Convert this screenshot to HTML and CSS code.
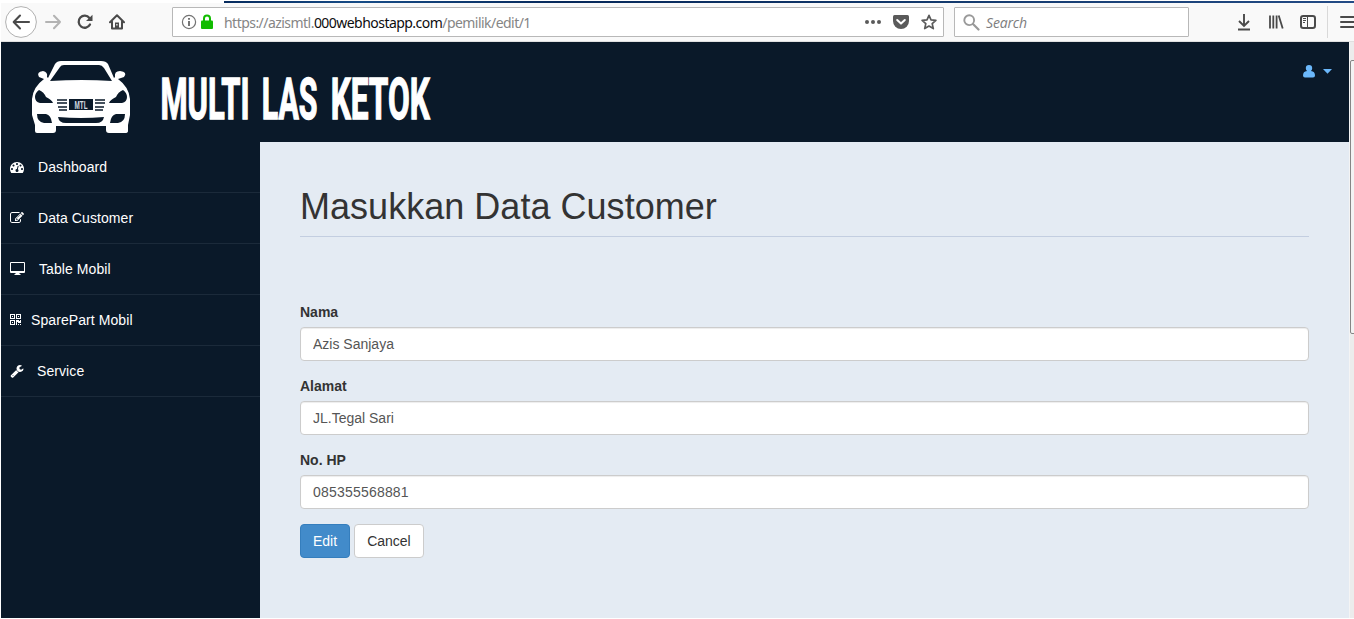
FILE: index.html
```html
<!DOCTYPE html>
<html lang="id">
<head>
<meta charset="utf-8">
<title>Multi Las Ketok</title>
<link rel="stylesheet" href="styles.css">
</head>
<body>
<div class="window">
  <div class="titlebar"></div>
  <div class="toolbar">
    <div class="nav">
      <span class="back"><svg width="32" height="32" viewBox="0 0 32 32"><circle cx="16" cy="16" r="15.4" fill="#fff" stroke="#b1b1b1"/><path d="M24 16H9M15 9.5L8.7 16l6.300 6.500" fill="none" stroke="#4a4a4a" stroke-width="2.100" stroke-linecap="round" stroke-linejoin="round"/></svg></span>
      <svg class="forward" width="16" height="16" viewBox="0 0 16 16"><path d="M1 8h14M9 1.800L15 8l-6 6.200" fill="none" stroke="#b3b3b3" stroke-width="2" stroke-linecap="round" stroke-linejoin="round"/></svg>
      <svg class="reload" width="16" height="16" viewBox="0 0 16 16"><path d="M13 10.500A6 6 0 1 1 12.400 4" fill="none" stroke="#4a4a4a" stroke-width="2.300" stroke-linecap="round"/><path d="M15.500.8v6.300H9z" fill="#4a4a4a"/></svg>
      <svg class="home" width="16" height="16" viewBox="0 0 16 16"><path d="M1 8.200L8 1.300l7 6.900M3 7.500v7h10v-7" fill="none" stroke="#4a4a4a" stroke-width="2" stroke-linecap="round" stroke-linejoin="round"/><path d="M6 14V8.500h4V14z" fill="#4a4a4a"/><path d="M7.300 10h1.200v1.500H7.300z" fill="#fff"/></svg>
    </div>
    <div class="urlbar">
      <svg class="info" width="16" height="16" viewBox="0 0 16 16"><circle cx="8" cy="8" r="6.600" fill="none" stroke="#737373" stroke-width="1.200"/><path d="M7.100 7h1.800v5H7.100zM7.100 4h1.800v1.800H7.100z" fill="#666"/></svg>
      <svg class="lock" width="12" height="16" viewBox="0 0 12 16"><path d="M3 7V4.600a3 3 0 0 1 6 0V7" fill="none" stroke="#12bc00" stroke-width="2"/><rect y="6.500" width="12" height="8.500" rx="1" fill="#12bc00"/></svg>
      <div class="address">https://azismtl.<b class="domain">000webhostapp.com</b>/pemilik/edit/1</div>
      <svg class="dots" width="18" height="6" viewBox="0 0 18 6"><g fill="#5a5a5a"><circle cx="3" cy="3" r="2"/><circle cx="9" cy="3" r="2"/><circle cx="15" cy="3" r="2"/></g></svg>
      <svg class="pocket" width="16" height="14" viewBox="0 0 16 14"><path d="M1.500 0h13Q16 0 16 1.500V6A8 8 0 0 1 0 6V1.500Q0 0 1.500 0z" fill="#5a5a5a"/><path d="M4.200 5L8 8.600 11.800 5" fill="none" stroke="#fff" stroke-width="2" stroke-linecap="round" stroke-linejoin="round"/></svg>
      <svg class="star" width="16" height="16" viewBox="0 0 16 16"><path d="M8 1.300l2 4.500 4.900.5-3.700 3.300 1.100 5L8 12.100l-4.300 2.500 1.100-5L1.100 6.300l4.900-.5z" fill="none" stroke="#5a5a5a" stroke-width="1.700" stroke-linejoin="round"/></svg>
    </div>
    <div class="searchbar">
      <svg width="17" height="17" viewBox="0 0 17 17"><circle cx="6.200" cy="6.200" r="4.900" fill="none" stroke="#999" stroke-width="1.900"/><path d="M10 10l5.500 5.500" stroke="#999" stroke-width="2.200" stroke-linecap="round"/></svg>
      <span class="hint">Search</span>
    </div>
    <div class="tools">
      <svg width="16" height="18" viewBox="0 0 16 18"><path d="M8 1v11M3 8l5 5 5-5M2 16.500h12" fill="none" stroke="#4a4a4a" stroke-width="1.900"/></svg>
      <svg width="16" height="16" viewBox="0 0 16 16"><path d="M2 1.500v13M5.300 1.500v13M8.600 1.500v13M10.700 1.500l4 13" fill="none" stroke="#4a4a4a" stroke-width="1.800"/></svg>
      <svg width="16" height="14" viewBox="0 0 16 14"><rect x="1" y="1" width="14" height="12" rx="2.200" fill="none" stroke="#4a4a4a" stroke-width="2"/><path d="M7.500 1v12M3 3.500h3M3 5.500h3M3 7.500h2" fill="none" stroke="#4a4a4a"/></svg>
      <span class="separator"></span>
      <svg class="menu" width="16" height="14" viewBox="0 0 16 14"><path d="M1 2h14M1 7h14M1 12h14" stroke="#4a4a4a" stroke-width="2" stroke-linecap="round"/></svg>
    </div>
  </div>
  <div class="viewport">
    <div class="page">
      <header class="header">
        <svg class="car" width="100" height="74" viewBox="0 0 100 74">
          <path fill="#fff" d="M17 17L24 3Q26 0 30 0H70Q75 0 77 3L83 17 84 16Q83 10 89 10 97 11 93 16L87 18Q98 26 99 38V54L97 64V70Q97 72 94 72H78Q75 72 75 69V65H25V69Q25 72 22 72H6Q4 72 4 70V64L1 54V38Q2 26 13 18L8 16Q5 11 12 10 17 11 16 16z"/>
          <g fill="#0a1929"><path d="M29 6Q30 4 33 4H68Q71 4 73 7L81 20Q51 18 19 20z"/><path d="M8 29Q13 31 15 36 21 39 22 42H9Q4 41 4 36 4 32 8 29zM92 29Q87 31 85 36 79 39 78 42H91Q96 41 96 36 96 32 92 29zM6 53H15Q20 54 21 62H13Q6 61 6 53zM94 53H85Q80 54 79 62H87Q94 61 94 53zM27 56Q50 58 73 56 72 62 65 62H35Q28 62 27 56z"/><rect x="38" y="38" width="24" height="11"/></g>
          <path d="M26 39H36M26 42H36M27 46H36M28 49H36M64 39H74M64 42H74M64 46H73M64 49H72" stroke="#0a1929" stroke-width="1.600"/>
          <text class="plate" x="43.500" y="47.500" textLength="13" lengthAdjust="spacingAndGlyphs">MTL</text>
        </svg>
        <svg class="wordmark" width="280" height="60" viewBox="0 0 280 60">
          <g transform="scale(.53 1)">
            <text x="1" y="50" textLength="168" lengthAdjust="spacingAndGlyphs">MULTI</text>
            <text x="192" y="50" textLength="105" lengthAdjust="spacingAndGlyphs">LAS</text>
            <text x="322" y="50" textLength="187" lengthAdjust="spacingAndGlyphs">KETOK</text>
          </g>
        </svg>
        <div class="user">
          <svg width="12" height="13" viewBox="0 0 12 13"><path d="M6 0a3.200 3.200 0 0 1 3.200 3.200Q9.200 5 8 6 12 6.300 12 10.500 12 12.500 10 12.500H2Q0 12.500 0 10.500 0 6.300 4 6 2.800 5 2.800 3.200A3.200 3.200 0 0 1 6 0z" fill="#6bb8fb"/></svg>
          <svg width="9" height="5" viewBox="0 0 9 5"><path d="M0 0h9L4.500 4.800z" fill="#6bb8fb"/></svg>
        </div>
      </header>
      <div class="body">
        <nav class="sidebar">
          <a class="item"><svg width="14" height="14" viewBox="0 0 1792 1792"><path d="M384 1152q0-53-37.500-90.500t-90.500-37.500-90.500 37.500-37.500 90.500 37.500 90.500 90.500 37.500 90.500-37.500 37.500-90.500zm192-448q0-53-37.500-90.500t-90.500-37.500-90.500 37.500-37.500 90.500 37.500 90.500 90.500 37.500 90.500-37.500 37.500-90.500zm428 481l101-382q6-26-7.500-48.500t-38.500-29.500-48 6.500-30 39.500l-101 382q-60 5-107 43.500t-63 98.500q-20 77 20 146t117 89 146-20 89-117q16-60-6-117t-72-91zm660-33q0-53-37.500-90.500t-90.500-37.500-90.500 37.500-37.500 90.500 37.500 90.500 90.500 37.500 90.500-37.500 37.500-90.500zm-640-640q0-53-37.500-90.500t-90.500-37.500-90.500 37.500-37.500 90.500 37.500 90.500 90.500 37.500 90.500-37.500 37.500-90.500zm448 192q0-53-37.500-90.500t-90.500-37.500-90.500 37.500-37.500 90.500 37.500 90.500 90.500 37.500 90.500-37.500 37.500-90.500zm320 448q0 261-141 483-19 29-54 29h-1402q-35 0-54-29-141-221-141-483 0-182 71-348t191-286 286-191 348-71 348 71 286 191 191 286 71 348z"/></svg><span>Dashboard</span></a>
          <a class="item"><svg width="14" height="14" viewBox="0 0 1792 1792"><path d="M888 1184l116-116-152-152-116 116v56h96v96h56zm440-720q-16-16-33 1l-350 350q-17 17-1 33t33-1l350-350q17-17 1-33zm80 594v190q0 119-84.500 203.500t-203.500 84.500h-832q-119 0-203.500-84.500t-84.500-203.500v-832q0-119 84.500-203.500t203.500-84.500h832q63 0 117 25 15 7 18 23 3 17-9 29l-49 49q-14 14-32 8-23-6-45-6h-832q-66 0-113 47t-47 113v832q0 66 47 113t113 47h832q66 0 113-47t47-113v-126q0-13 9-22l64-64q15-15 35-7t20 29zm-96-738l288 288-672 672h-288v-288zm444 132l-92 92-288-288 92-92q28-28 68-28t68 28l152 152q28 28 28 68t-28 68z"/></svg><span>Data Customer</span></a>
          <a class="item"><svg class="desktop" width="15" height="14" viewBox="0 0 15 14"><path fill-rule="evenodd" d="M1 0h13q1 0 1 1v9q0 1-1 1H9.500v1h1v1h-6v-1h1v-1H1q-1 0-1-1V1q0-1 1-1zM1 1v8h13V1z"/></svg><span>Table Mobil</span></a>
          <a class="item"><svg class="qr" width="12" height="12" viewBox="0 0 12 12"><path fill-rule="evenodd" d="M0 0h5v5H0zM1 1v3h3V1zM6 0h5v5H6zM7 1v3h3V1zM0 6h5v5H0zM1 7v3h3V7zM2 2h1v1H2zM8 2h1v1H8zM2 8h1v1H2zM6 6h3v1h1V6h1v3H8V8H7v3H6zM8 10h1v1H8zM10 10h1v1h-1z"/></svg><span>SparePart Mobil</span></a>
          <a class="item"><svg class="wrench" width="14" height="14" viewBox="0 0 1792 1792"><path d="M448 1472q0-26-19-45t-45-19-45 19-19 45 19 45 45 19 45-19 19-45zm644-420l-682 682q-37 37-90 37-52 0-91-37l-106-108q-38-36-38-90 0-53 38-91l681-681q39 98 114.500 173.500t173.500 114.500zm634-435q0 39-23 106-47 134-164.500 217.500t-258.500 83.500q-185 0-316.500-131.500t-131.500-316.500 131.500-316.500 316.500-131.500q58 0 121.500 16.500t107.500 46.500q16 11 16 28t-16 28l-293 169v224l193 107q5-3 79-48.500t135.500-81 70.500-35.500q15 0 23.500 10t8.500 25z"/></svg><span>Service</span></a>
        </nav>
        <main class="content">
          <h1 class="heading">Masukkan Data Customer</h1>
          <form class="form">
            <label class="field">Nama<input class="control" type="text" value="Azis Sanjaya"></label>
            <label class="field">Alamat<input class="control" type="text" value="JL.Tegal Sari"></label>
            <label class="field">No. HP<input class="control phone" type="text" value="085355568881"></label>
            <div class="actions">
              <button class="button primary" type="button">Edit</button>
              <button class="button" type="button">Cancel</button>
            </div>
          </form>
        </main>
      </div>
    </div>
    <div class="scrollbar"><div class="thumb"></div></div>
  </div>
</div>
</body>
</html>
```

FILE: styles.css
```css
* { box-sizing: border-box; }
body {
  margin: 0;
  background: #fff;
  font: 14px/20px "Liberation Sans", Arial, sans-serif;
  color: #333;
  overflow: hidden;
}
svg { display: block; flex: none; }
.window { display: flex; flex-direction: column; width: 1354px; height: 619px; padding: 1px 0 1px 1px; }
.titlebar { flex: none; height: 2px; margin-left: 223px; background: linear-gradient(90deg, #062b5e, #174c87 12%, #06285a 30%, #12386b 60%, #234b85); }
.toolbar {
  display: flex;
  flex: none;
  align-items: center;
  height: 39px;
  background: #f9f9f9;
  border-bottom: 1px solid #e0e0e0;
  overflow: hidden;
}
.nav { display: flex; flex: none; align-items: center; width: 171px; padding-left: 4px; }
.forward { margin-left: 8px; }
.reload, .home { margin-left: 16px; }
.urlbar, .searchbar {
  display: flex;
  flex: none;
  align-items: center;
  height: 30px;
  background: #fff;
  border: 1px solid #b8b8b8;
  border-radius: 1px;
}
.urlbar { width: 772px; padding: 0 6px 0 8px; }
.lock { margin-left: 4px; }
.address { flex: 1; margin-left: 11px; padding-top: 1px; font: 14px/20px "Noto Sans", "Open Sans", sans-serif; letter-spacing: -0.54px; color: #858585; white-space: nowrap; }
.domain { font-weight: 400; color: #0c0c0d; }
.pocket { margin-left: 11px; }
.star { margin-left: 12px; }
.searchbar { width: 235px; margin-left: 10px; padding-left: 8px; }
.hint { margin-left: 6px; padding-top: 2px; font: italic 14px/20px "Open Sans", "Noto Sans", sans-serif; letter-spacing: -0.15px; color: #7d7d7d; }
.tools { display: flex; flex: none; align-items: center; gap: 16px; margin-left: 47px; }
.separator { width: 1px; height: 32px; margin: 0 -5px 0 -5px; background: #d9d9d9; }
.menu { margin-left: 1px; }
.viewport { display: flex; flex: 1; }
.page { display: flex; flex-direction: column; width: 1348px; }
.header { display: flex; height: 100px; padding: 19px 17px 0 30px; background: #0a1929; }
.plate { font: bold 10px "Liberation Sans", sans-serif; fill: #d5dce2; }
.wordmark { margin: 8px 0 0 29px; }
.wordmark text { font: 700 57px Roboto, sans-serif; fill: #fff; stroke: #fff; stroke-width: 1.4px; }
.user { display: flex; gap: 8px; margin: 4px 0 0 auto; }
.user svg + svg { margin-top: 4px; }
.body { display: flex; flex: 1; }
.sidebar { width: 259px; background: #0a1929; }
.item { display: flex; align-items: center; height: 51px; padding: 0 9px; border-bottom: 1px solid #1b2a3a; color: #fff; letter-spacing: 0.08px; }
.item svg { margin: 0 14px 0 0; fill: #fff; }
.item .qr { margin-right: 9px; }
.item .wrench { margin-right: 13px; }
.content { flex: 1; padding: 40px 40px 0; background: #e4ebf3; }
.heading { height: 55px; margin: 0; padding-top: 5px; border-bottom: 1px solid #c3cee0; font-size: 36px; line-height: 40px; font-weight: 400; letter-spacing: 0.03px; color: #333; white-space: nowrap; }
.form { padding-top: 65px; }
.field { display: block; margin-bottom: 15px; font-weight: 700; }
.control {
  display: block;
  width: 100%;
  height: 34px;
  margin-top: 5px;
  padding: 6px 12px;
  border: 1px solid #ccc;
  border-radius: 4px;
  background: #fff;
  box-shadow: inset 0 1px 1px rgba(0, 0, 0, .075);
  font: 14px/20px "Liberation Sans", Arial, sans-serif;
  color: #555;
}
.phone { letter-spacing: 0.2px; }
.actions { display: flex; gap: 4px; }
.button { height: 34px; padding: 0 12px; border: 1px solid #ccc; border-radius: 4px; background: #fff; font: 14px/20px "Liberation Sans", Arial, sans-serif; color: #333; }
.primary { background: #428bca; border-color: #357ebd; color: #fff; }
.scrollbar { flex: 1; padding-top: 18px; background: #ececec; border-left: 1px solid #f4f4f4; overflow: hidden; }
.thumb { width: 12px; height: 274px; border: 1px solid #858585; border-radius: 2px; background: #f3f3f3; }
```
